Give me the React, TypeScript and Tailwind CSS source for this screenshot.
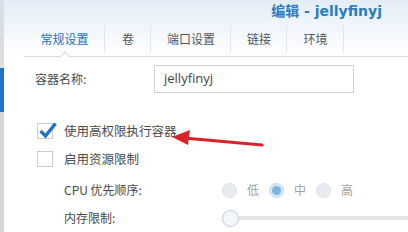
import React from 'react';

const font = { fontFamily: '"Noto Sans CJK SC", "Noto Sans", sans-serif' };

const tabs = [
  { label: '常规设置', w: 'w-[81px]', active: true },
  { label: '卷', w: 'w-[46px]' },
  { label: '端口设置', w: 'w-[80px]' },
  { label: '链接', w: 'w-[56px]' },
  { label: '环境', w: 'w-[57px]' },
];

const Radio: React.FC<{ checked?: boolean; label: string }> = ({ checked, label }) => (
  <div className="flex items-center">
    {checked ? (
      <span className="w-[15px] h-[15px] rounded-full bg-[#d6e7f7] border border-[#c3daf0] flex items-center justify-center">
        <span className="w-[9px] h-[9px] rounded-full bg-[#7db4e6]" />
      </span>
    ) : (
      <span className="w-[15px] h-[15px] rounded-full bg-[#e8ebef] border border-[#dde1e6]" />
    )}
    <span className="ml-[10px] text-[#a0a0a0]">{label}</span>
  </div>
);

const App: React.FC = () => {
  return (
    <div className="relative w-[408px] h-[232px] overflow-hidden bg-white flex text-[12px] text-[#4a4a4a]" style={font}>
      {/* left edge strip */}
      <div className="w-[4px] flex flex-col shrink-0">
        <div className="h-[68px] bg-[#dadde1]" />
        <div className="h-[44px] bg-[#1b76c6]" />
        <div className="flex-1 bg-[#d4d7da]" />
      </div>

      <div className="flex-1 flex flex-col">
        <div className="bg-gradient-to-b from-[#e4edf7] to-[#ffffff] h-[57px] flex flex-col">
          <div className="h-[22px] flex items-center justify-end pr-[26px]">
            <span className="font-bold text-[14px] text-[#2a7dc2] leading-none" style={{ fontFamily: '"DejaVu Sans", "Noto Sans CJK SC", sans-serif' }}>
              编辑 - jellyfinyj
            </span>
          </div>
          <div className="ml-[20px] h-[35px] flex border-b border-[#d8dadd] relative">
            {tabs.map((t, i) => (
              <div key={i} className={`${t.w} flex items-center justify-center relative`}>
                <span className={t.active ? 'text-[#2073bd]' : 'text-[#555]'}>{t.label}</span>
                <span className="absolute right-0 top-[3px] bottom-[3px] w-px bg-[#e3e5e8]" />
                {t.active && (
                  <span className="absolute bottom-[-5px] left-[37px] w-[8px] h-[8px] rotate-45 bg-white border-l border-t border-[#d8dadd]" />
                )}
              </div>
            ))}
          </div>
        </div>

        <div className="pl-[31px] pt-[8px] flex flex-col">
          <div className="flex items-center h-[28px]">
            <span className="w-[119px]">容器名称:</span>
            <div className="w-[200px] h-[28px] border border-[#cfd2d5] flex items-center pl-[9px] text-[13px] text-[#444]" style={{ fontFamily: '"Open Sans", sans-serif' }}>
              jellyfinyj
            </div>
          </div>

          <div className="flex items-center h-[16px] mt-[30px] pl-[2px]">
            <span className="relative w-[16px] h-[16px] border border-[#c9cdd1] bg-white">
              <svg width="20" height="18" viewBox="0 0 20 18" className="absolute left-[0px] top-[-3px]">
                <path d="M2.5 10 L7.5 15 L17.5 2.5" fill="none" stroke="#1f72c4" strokeWidth="3.4" strokeLinejoin="miter" />
              </svg>
            </span>
            <span className="ml-[11px] text-[12.5px]">使用高权限执行容器</span>
          </div>

          <div className="flex items-center h-[16px] mt-[12px] pl-[2px]">
            <span className="w-[16px] h-[16px] border border-[#c9cdd1] bg-white" />
            <span className="ml-[11px] text-[12.5px]">启用资源限制</span>
          </div>

          <div className="flex items-center h-[20px] mt-[13px] pl-[29px]">
            <span className="w-[158px]">CPU 优先顺序:</span>
            <div className="flex items-center gap-[10px]">
              <Radio label="低" />
              <Radio checked label="中" />
              <Radio label="高" />
            </div>
          </div>

          <div className="flex items-center h-[20px] mt-[8px] pl-[29px]">
            <span className="w-[158px]">内存限制:</span>
            <div className="flex-1 flex items-center">
              <span className="w-[17px] h-[17px] rounded-full bg-[#f3f7fc] border border-[#bccbda] shrink-0" />
              <span className="flex-1 h-[4px] bg-[#e3e3e3]" />
            </div>
          </div>
        </div>
      </div>

      {/* red annotation arrow */}
      <svg className="absolute left-0 top-0 pointer-events-none" width="408" height="232">
        <line x1="262" y1="145" x2="184" y2="138" stroke="#d8232a" strokeWidth="3.2" strokeLinecap="round" />
        <polygon points="172,137 190,130 188,145" fill="#d8232a" />
      </svg>
    </div>
  );
};

export default App;
